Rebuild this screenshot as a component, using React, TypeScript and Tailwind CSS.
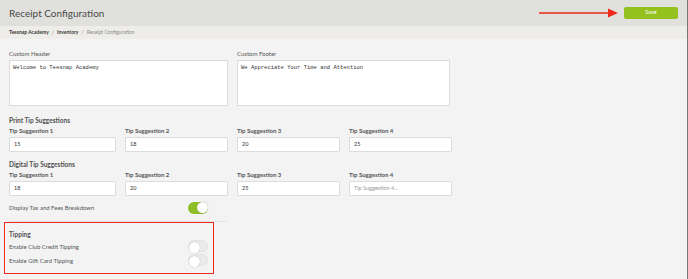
import { useState } from 'react';

const font = { fontFamily: 'Lato, "Noto Sans", sans-serif' };

function Toggle({ on }: { on: boolean }) {
  return (
    <div
      className={`relative w-[20px] h-[12px] rounded-full ${on ? 'bg-[#8fbf26]' : 'bg-[#ebebeb] border border-[#e2e2e2]'}`}
    >
      <div
        className={`absolute top-[0.5px] w-[11px] h-[11px] rounded-full bg-white shadow-[0_0_1px_rgba(0,0,0,0.35)] ${on ? 'right-[0px]' : 'left-[0px]'}`}
      />
    </div>
  );
}

function TipRow({ title, values }: { title: string; values: string[] }) {
  const widths = ['w-[107px]', 'w-[103px]', 'w-[103px]', 'w-[103px]'];
  return (
    <div>
      <div className="text-[6.5px] font-bold text-[#505050] h-[10px] leading-[10px]">{title}</div>
      <div className="flex gap-x-[9px]">
        {values.map((v, i) => (
          <div key={i} className={widths[i]}>
            <div className="text-[6px] font-bold text-[#555] h-[11px] leading-[10px]">Tip Suggestion {i + 1}</div>
            <div className="h-[15px] bg-white border border-[#dcdcdc] rounded-[1px] px-[4px] flex items-center text-[5.5px]">
              {v ? <span className="text-[#333]">{v}</span> : <span className="text-[#9a9a9a]">Tip Suggestion {i + 1}...</span>}
            </div>
          </div>
        ))}
      </div>
    </div>
  );
}

export default function App() {
  const [header] = useState('Welcome to Teesnap Academy');
  const [footer] = useState('We Appreciate Your Time and Attention');

  return (
    <div className="w-[688px] h-[279px] bg-[#f3f3f3] overflow-hidden border-r border-[#777]" style={font}>
      {/* Header bar */}
      <div className="h-[26px] bg-[#e0e0dc] flex items-center justify-between pl-[9px] pr-[9px]">
        <h1 className="text-[10px] text-[#4a4a4a] leading-none">Receipt Configuration</h1>
        <div className="flex items-center gap-[5px]">
          <svg width="80" height="10" viewBox="0 0 80 10">
            <line x1="0" y1="5" x2="70" y2="5" stroke="#ee2a1b" strokeWidth="1.5" />
            <polygon points="69,0.5 79,5 69,9.5" fill="#ee2a1b" />
          </svg>
          <button className="w-[54px] h-[12px] bg-[#95c11f] rounded-[2px] text-white text-[5.5px] leading-none">Save</button>
        </div>
      </div>

      {/* Breadcrumb */}
      <div className="h-[13px] bg-[#eeede9] flex items-center pl-[9px] text-[5px]">
        <span className="font-bold text-[#3a3a3a]">Teesnap Academy</span>
        <span className="text-[#888] mx-[3px]">/</span>
        <span className="font-bold text-[#3a3a3a]">Inventory</span>
        <span className="text-[#888] mx-[3px]">/</span>
        <span className="text-[#888]">Receipt Configuration</span>
      </div>

      <div className="pl-[9px] pt-[11px]">
        {/* Custom header / footer */}
        <div className="flex gap-x-[9px]">
          <div className="w-[219px]">
            <div className="text-[6px] text-[#555] h-[10px] leading-[8px]">Custom Header</div>
            <div className="h-[46px] bg-white border border-[#dcdcdc] px-[3px] pt-[3px] text-[5.5px] text-[#333]" style={{ fontFamily: '"Liberation Mono", monospace' }}>
              {header}
            </div>
          </div>
          <div className="w-[213px]">
            <div className="text-[6px] text-[#555] h-[10px] leading-[8px]">Custom Footer</div>
            <div className="h-[46px] bg-white border border-[#dcdcdc] px-[3px] pt-[3px] text-[5.5px] text-[#333]" style={{ fontFamily: '"Liberation Mono", monospace' }}>
              {footer}
            </div>
          </div>
        </div>

        <div className="mt-[10px] flex flex-col gap-y-[8px]">
          <TipRow title="Print Tip Suggestions" values={['15', '18', '20', '25']} />
          <TipRow title="Digital Tip Suggestions" values={['18', '20', '25', '']} />
        </div>

        {/* Display tax */}
        <div className="w-[217px] mt-[5px] flex items-center justify-between h-[13px] pr-[18px]">
          <span className="text-[6px] text-[#555]">Display Tax and Fees Breakdown</span>
          <Toggle on />
        </div>
        <div className="w-[217px] h-px bg-[#e3e3e3] mt-[7px]" />
      </div>

      {/* Tipping */}
      <div className="ml-[4px] w-[210px] h-[52px] border-[1.5px] border-[#ee2a1b] pl-[4px] pt-[7px] pr-[4px]">
        <div className="text-[6.5px] font-bold text-[#505050] leading-[9px]">Tipping</div>
        <div className="flex items-center justify-between h-[14px] pr-[1px]">
          <span className="text-[6px] text-[#555]">Enable Club Credit Tipping</span>
          <Toggle on={false} />
        </div>
        <div className="flex items-center justify-between h-[14px] pr-[1px]">
          <span className="text-[6px] text-[#555]">Enable Gift Card Tipping</span>
          <Toggle on={false} />
        </div>
      </div>
    </div>
  );
}
